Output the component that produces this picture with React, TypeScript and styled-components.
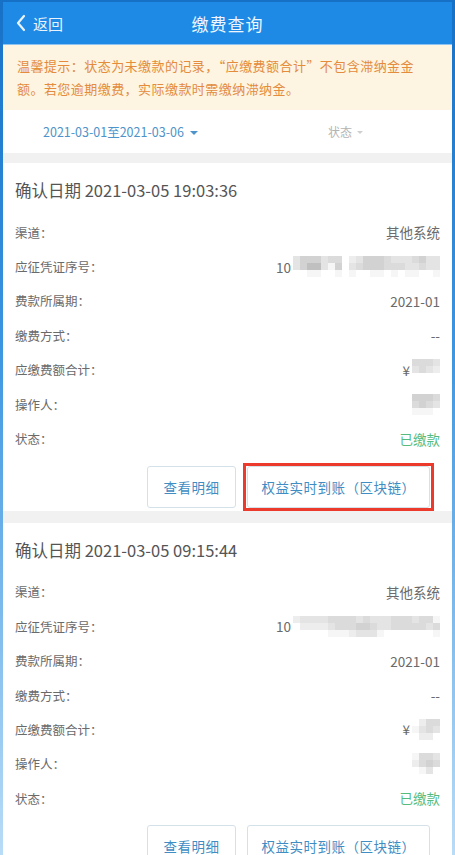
import React from "react";
import styled, { createGlobalStyle } from "styled-components";

const Global = createGlobalStyle`
  html, body { margin: 0; padding: 0; background: #fff; }
  body { font-family: "Noto Sans CJK SC", "Noto Sans", "Liberation Sans", sans-serif; }
  * { box-sizing: border-box; }
`;

const Frame = styled.div`
  width: 455px;
  height: 855px;
  padding: 2px 3px 0 3px;
  background: linear-gradient(180deg, #1670c6 0%, #3b95e0 40%, #b9dcf7 100%);
  overflow: hidden;
`;

const Screen = styled.div`
  height: 100%;
  background: #fff;
  display: flex;
  flex-direction: column;
  overflow: hidden;
`;

const Header = styled.header`
  height: 43px;
  flex: none;
  background: #1f8ae6;
  border-bottom: 1px solid #8cc3ef;
  display: grid;
  grid-template-columns: 1fr auto 1fr;
  align-items: center;
  color: #fff;
`;

const Back = styled.div`
  display: flex;
  align-items: center;
  gap: 6px;
  padding-left: 12px;
  font-size: 15px;
  color: #e8f3fd;
`;

const Title = styled.div`
  font-size: 17px;
  letter-spacing: 1px;
  color: #eef6fe;
`;

const Notice = styled.div`
  flex: none;
  background: #fdf5e1;
  color: #e48b3c;
  font-size: 13px;
  letter-spacing: 0.45px;
  line-height: 23px;
  padding: 9px 10px 9px 14px;
  height: 65px;
  white-space: nowrap;
`;

const FilterBar = styled.div`
  flex: none;
  height: 43px;
  background: #fff;
  display: flex;
  align-items: center;
  padding: 0 0 0 40px;
`;

const DateFilter = styled.div`
  display: flex;
  align-items: center;
  gap: 6px;
  font-size: 12.5px;
  color: #4e93c9;
  width: 285px;
`;

const StatusFilter = styled.div`
  display: flex;
  align-items: center;
  gap: 5px;
  font-size: 12px;
  color: #b4b4b4;
`;

const Caret = styled.span<{ $color: string; $size: number }>`
  width: 0;
  height: 0;
  border-left: ${(p) => p.$size}px solid transparent;
  border-right: ${(p) => p.$size}px solid transparent;
  border-top: ${(p) => p.$size}px solid ${(p) => p.$color};
  margin-top: 2px;
`;

const List = styled.div`
  flex: 1;
  background: #f1f1f1;
  padding-top: 10px;
  display: flex;
  flex-direction: column;
  gap: 12px;
`;

const Card = styled.section`
  background: #fff;
  padding: 16px 12px 0 12px;
  flex: none;
`;

const CardTitle = styled.div`
  font-size: 16.5px;
  line-height: 22px;
  color: #555;
  margin-bottom: 14px;
`;

const Row = styled.div`
  height: 34.4px;
  display: flex;
  align-items: center;
  justify-content: space-between;
  font-size: 12.5px;
  color: #6a6a6a;
`;

const Value = styled.div<{ $green?: boolean }>`
  display: flex;
  align-items: center;
  gap: 2px;
  font-size: 13.5px;
  color: ${(p) => (p.$green ? "#55bc80" : "#6a6a6a")};
`;

const Actions = styled.div`
  display: flex;
  justify-content: flex-end;
  align-items: center;
  gap: 7px;
  padding-right: 6px;
  margin-top: 7px;
`;

const Button = styled.button<{ $w: number }>`
  width: ${(p) => p.$w}px;
  height: 42px;
  border: 1px solid #d4e1e8;
  border-radius: 3px;
  background: #fff;
  color: #3f8dc3;
  font-family: inherit;
  font-size: 13.5px;
  letter-spacing: 0.5px;
  padding: 0;
`;

const Highlight = styled.div<{ $on: boolean }>`
  padding: 0 1px;
  border: 3px solid ${(p) => (p.$on ? "#ec3b2c" : "transparent")};
  display: flex;
`;

const MosaicGrid = styled.div<{ $cols: number; $cell: number }>`
  display: grid;
  grid-template-columns: repeat(${(p) => p.$cols}, ${(p) => p.$cell}px);
  grid-auto-rows: ${(p) => p.$cell}px;
`;

const Cell = styled.span<{ $l: number }>`
  background: ${(p) => `rgb(${255 - p.$l * 9}, ${255 - p.$l * 9}, ${255 - p.$l * 9})`};
`;

function Mosaic({ pattern, cell = 7 }: { pattern: string[]; cell?: number }) {
  const cols = pattern[0].length;
  return (
    <MosaicGrid $cols={cols} $cell={cell}>
      {pattern.flatMap((r, i) =>
        r.split("").map((c, j) => <Cell key={`${i}-${j}`} $l={Number(c)} />)
      )}
    </MosaicGrid>
  );
}

type Rec = {
  date: string;
  serialMosaic: string[];
  amountMosaic: string[];
  opMosaic: string[];
  highlight: boolean;
};

const records: Rec[] = [
  {
    date: "2021-03-05 19:03:36",
    serialMosaic: [
      "355534402355543334533",
      "357731503455544433433",
      "001100101001101011001",
    ],
    amountMosaic: ["4443", "3432", "0000"],
    opMosaic: ["5554", "4543", "1110"],
    highlight: true,
  },
  {
    date: "2021-03-05 09:15:44",
    serialMosaic: [
      "233334444343334443441",
      "022223444554334444434",
      "000001112333100000001",
    ],
    amountMosaic: ["0244", "1343", "0220"],
    opMosaic: ["1443", "2454", "0130"],
    highlight: false,
  },
];

function RecordCard({ r }: { r: Rec }) {
  return (
    <Card>
      <CardTitle>确认日期 {r.date}</CardTitle>
      <Row>
        <span>渠道：</span>
        <Value>其他系统</Value>
      </Row>
      <Row>
        <span>应征凭证序号：</span>
        <Value>
          10
          <Mosaic pattern={r.serialMosaic} />
        </Value>
      </Row>
      <Row>
        <span>费款所属期：</span>
        <Value>2021-01</Value>
      </Row>
      <Row>
        <span>缴费方式：</span>
        <Value>--</Value>
      </Row>
      <Row>
        <span>应缴费额合计：</span>
        <Value>
          ¥ <Mosaic pattern={r.amountMosaic} />
        </Value>
      </Row>
      <Row>
        <span>操作人：</span>
        <Value>
          <Mosaic pattern={r.opMosaic} />
        </Value>
      </Row>
      <Row>
        <span>状态：</span>
        <Value $green>已缴款</Value>
      </Row>
      <Actions>
        <Button $w={89}>查看明细</Button>
        <Highlight $on={r.highlight}>
          <Button $w={183}>权益实时到账（区块链）</Button>
        </Highlight>
      </Actions>
    </Card>
  );
}

export default function App() {
  return (
    <>
      <Global />
      <Frame>
        <Screen>
          <Header>
            <Back>
              <svg width="12" height="18" viewBox="0 0 12 18">
                <path d="M9 2 L3 9 L9 16" fill="none" stroke="#e8f3fd" strokeWidth="2.2" strokeLinecap="round" strokeLinejoin="round" />
              </svg>
              <span>返回</span>
            </Back>
            <Title>缴费查询</Title>
            <div />
          </Header>
          <Notice>
            温馨提示：状态为未缴款的记录，“应缴费额合计”不包含滞纳金金
            <br />
            额。若您逾期缴费，实际缴款时需缴纳滞纳金。
          </Notice>
          <FilterBar>
            <DateFilter>
              2021-03-01至2021-03-06
              <Caret $color="#4e93c9" $size={4} />
            </DateFilter>
            <StatusFilter>
              状态
              <Caret $color="#cfcfcf" $size={3} />
            </StatusFilter>
          </FilterBar>
          <List>
            {records.map((r) => (
              <RecordCard key={r.date} r={r} />
            ))}
          </List>
        </Screen>
      </Frame>
    </>
  );
}
